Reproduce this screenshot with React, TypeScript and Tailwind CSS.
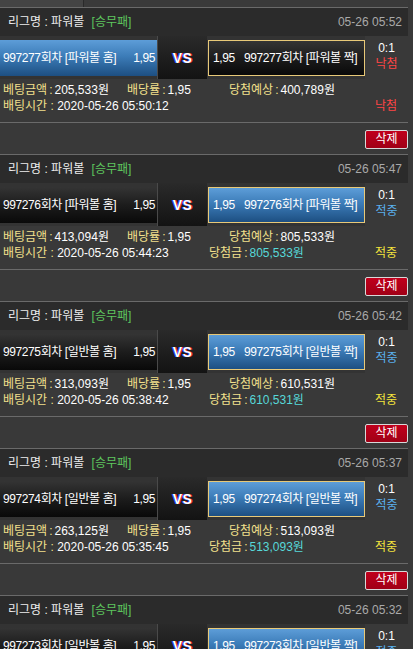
import React from "react";

type Bet = {
  time: string;
  round: string;
  kind: string;
  homeBlue: boolean;
  amount: string;
  expected: string;
  betTime: string;
  won: boolean;
};

const bets: Bet[] = [
  { time: "05-26 05:52", round: "997277", kind: "파워볼", homeBlue: true, amount: "205,533원", expected: "400,789원", betTime: "2020-05-26 05:50:12", won: false },
  { time: "05-26 05:47", round: "997276", kind: "파워볼", homeBlue: false, amount: "413,094원", expected: "805,533원", betTime: "2020-05-26 05:44:23", won: true },
  { time: "05-26 05:42", round: "997275", kind: "일반볼", homeBlue: false, amount: "313,093원", expected: "610,531원", betTime: "2020-05-26 05:38:42", won: true },
  { time: "05-26 05:37", round: "997274", kind: "일반볼", homeBlue: false, amount: "263,125원", expected: "513,093원", betTime: "2020-05-26 05:35:45", won: true },
  { time: "05-26 05:32", round: "997273", kind: "일반볼", homeBlue: false, amount: "201,400원", expected: "392,730원", betTime: "2020-05-26 05:30:51", won: true },
];

const blue = "bg-[linear-gradient(180deg,#5d9dd8_0%,#3c7cb8_45%,#1d4f82_100%)]";
const dark = "bg-[linear-gradient(180deg,#343434_0%,#1c1c1c_50%,#090909_100%)]";

const Label = ({ text }: { text: string }) => (
  <span>
    <span className="text-[#f2e08c]">{text}</span>
    <span className="text-[#f2e08c] px-[2px]">:</span>
  </span>
);

const BetBlock = ({ bet }: { bet: Bet }) => {
  return (
    <div>
      {/* 헤더 */}
      <div className="h-px bg-[#6a6a6a]" />
      <div className="h-[28px] bg-[#2b2b2b] flex items-center justify-between pl-[8px] pr-[6px]">
        <span className="text-[#eeeeee]">
          리그명 : 파워볼 <span className="text-[#5ec65e] ml-[4px]">[승무패]</span>
        </span>
        <span className="text-[#a9a9a9]">{bet.time}</span>
      </div>

      {/* 경기 */}
      <div className="h-[43px] flex bg-[#333333] tracking-[-0.4px]">
        <div
          className={`mt-[4px] h-[36px] w-[157px] flex items-center justify-between pl-[3px] pr-[2px] text-white ${bet.homeBlue ? blue : dark}`}
        >
          <span>
            {bet.round}회차 [{bet.kind} 홈]
          </span>
          <span>1,95</span>
        </div>
        <div className="w-[50px] border-l border-[#4a4a4a] bg-[linear-gradient(180deg,#2a2a2a,#131313)] flex items-center justify-center">
          <span className="text-[14px] font-bold text-white tracking-[0.5px] [text-shadow:-1px_0_#2848ff,1px_0_#ff2a2a]">
            VS
          </span>
        </div>
        <div className="w-px" />
        <div
          className={`mt-[4px] h-[36px] w-[157px] flex items-center border border-[#e8c978] pl-[4px] text-white ${bet.homeBlue ? dark : blue}`}
        >
          <span className="w-[31px]">1,95</span>
          <span>
            {bet.round}회차 [{bet.kind} 짝]
          </span>
        </div>
        <div className="flex-1 flex flex-col items-center pt-[4px] bg-[#393939] tracking-normal">
          <span className="text-white">0:1</span>
          <span className={bet.won ? "text-[#5ab0ee]" : "text-[#ff4545]"}>
            {bet.won ? "적중" : "낙첨"}
          </span>
        </div>
      </div>

      {/* 베팅 정보 */}
      <div className="h-[43px] pt-[3px] pl-[3px]">
        <div className="flex">
          <span className="w-[124px]">
            <Label text="베팅금액" />
            <span className="text-white">{bet.amount}</span>
          </span>
          <span className="w-[102px]">
            <Label text="배당률" />
            <span className="text-white">1,95</span>
          </span>
          <span>
            <Label text="당첨예상" />
            <span className="text-white">{bet.expected}</span>
          </span>
        </div>
        <div className="flex">
          <span className="w-[206px]">
            <span className="text-[#f2e08c]">배팅시간 :</span> <span className="text-white">{bet.betTime}</span>
          </span>
          <span className="w-[166px]">
            {bet.won && (
              <>
                <Label text="당첨금" />
                <span className="text-[#57d8d8]">{bet.expected}</span>
              </>
            )}
          </span>
          <span className={bet.won ? "text-[#f4e43c]" : "text-[#ff4545]"}>
            {bet.won ? "적중" : "낙첨"}
          </span>
        </div>
      </div>

      {/* 삭제 */}
      <div className="h-px bg-[#6a6a6a]" />
      <div className="h-[31px] flex justify-end items-start pt-[7px]">
        <button className="w-[43px] h-[19px] rounded-[2px] border border-[#d8d8d8] bg-[linear-gradient(180deg,#c0001c,#a00016)] text-white text-[12px] leading-[17px]">
          삭제
        </button>
      </div>
    </div>
  );
};

export default function App() {
  return (
    <div className="h-[649px] overflow-hidden bg-[#393939] text-[12px] leading-[16px] font-['Liberation_Sans','Noto_Sans_CJK_KR',sans-serif]">
      <div className="w-[408px]">
        {/* 상단 탭 잔여 */}
        <div className="h-[7px] flex">
          <div className="w-[84px] bg-[#444444] border-r border-[#2a2a2a]" />
          <div className="flex-1 bg-[#3a3a3a]" />
        </div>
        {bets.map((bet) => (
          <BetBlock key={bet.round} bet={bet} />
        ))}
      </div>
    </div>
  );
}
